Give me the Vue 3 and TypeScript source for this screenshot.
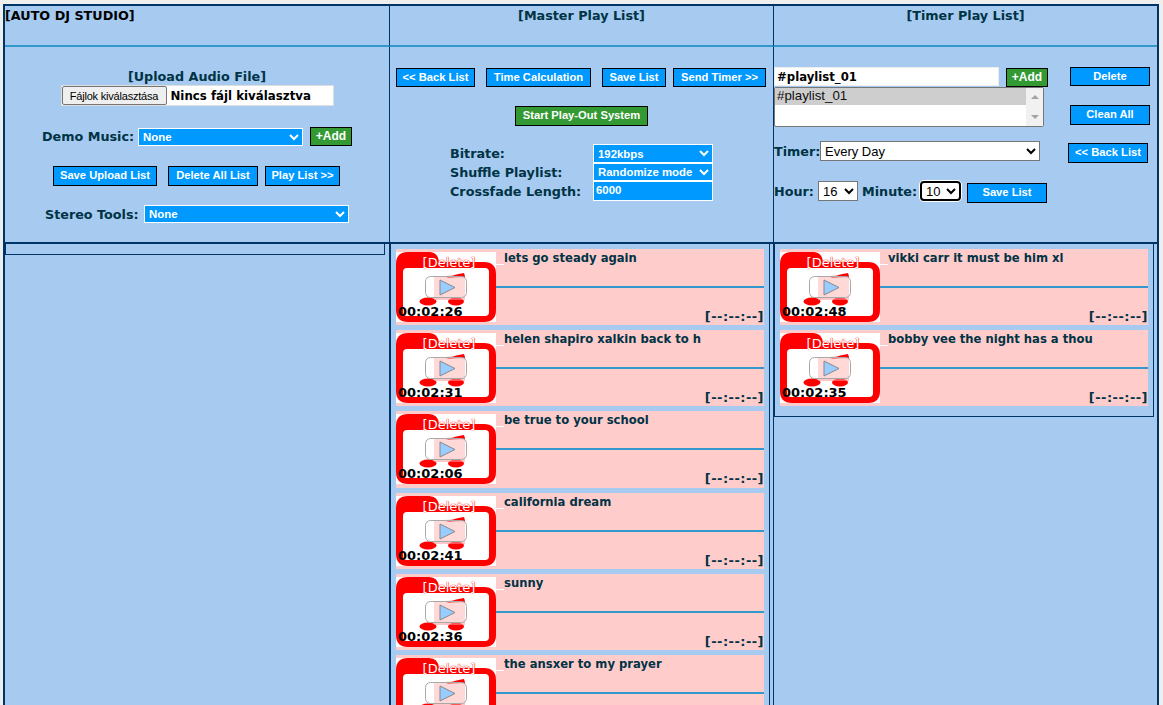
<script setup lang="ts">
interface Track { title: string; time: string }
const master: Track[] = [
  { title: 'lets go steady again', time: '00:02:26' },
  { title: 'helen shapiro xalkin back to h', time: '00:02:31' },
  { title: 'be true to your school', time: '00:02:06' },
  { title: 'california dream', time: '00:02:41' },
  { title: 'sunny', time: '00:02:36' },
  { title: 'the ansxer to my prayer', time: '00:02:52' },
]
const timer: Track[] = [
  { title: 'vikki carr it must be him xl', time: '00:02:48' },
  { title: 'bobby vee the night has a thou', time: '00:02:35' },
]
const lists = [
  { key: 'master', tracks: master, cls: '' },
  { key: 'timer', tracks: timer, cls: 'timer-box' },
]
</script>

<template>
  <div class="studio">
    <div class="cell head head-left">[AUTO DJ STUDIO]</div>
    <div class="cell head">[Master Play List]</div>
    <div class="cell head last">[Timer Play List]</div>

    <section class="cell tools upload">
      <div class="upload-title">[Upload Audio File]</div>
      <div class="file"><button class="file-btn">Fájlok kiválasztása</button><span>Nincs fájl kiválasztva</span></div>
      <div class="row demo">
        <label>Demo Music:</label>
        <select class="sel sel-demo"><option>None</option></select>
        <button class="btn green add">+Add</button>
      </div>
      <div class="row actions">
        <button class="btn w104">Save Upload List</button>
        <button class="btn w90">Delete All List</button>
        <button class="btn w75">Play List &gt;&gt;</button>
      </div>
      <div class="row stereo">
        <label>Stereo Tools:</label>
        <select class="sel sel-stereo"><option>None</option></select>
      </div>
    </section>

    <section class="cell tools master">
      <div class="row master-actions">
        <button class="btn w79">&lt;&lt; Back List</button>
        <button class="btn w105">Time Calculation</button>
        <button class="btn w64">Save List</button>
        <button class="btn w93">Send Timer &gt;&gt;</button>
      </div>
      <button class="btn green start">Start Play-Out System</button>
      <div class="settings">
        <label>Bitrate:</label>
        <select class="sel sel-set"><option>192kbps</option></select>
        <label>Shuffle Playlist:</label>
        <select class="sel sel-set"><option>Randomize mode</option></select>
        <label>Crossfade Length:</label>
        <input class="sel sel-set fade" value="6000" />
      </div>
    </section>

    <section class="cell tools last timer">
      <div class="timer-top">
        <div class="pl-left">
          <div class="pl-add">
            <input class="pl-name" value="#playlist_01" />
            <button class="btn green add">+Add</button>
          </div>
          <div class="pl-wrap">
            <select class="pl-list" size="2">
              <option selected>#playlist_01</option>
            </select>
            <div class="pl-scroll"><i class="up"></i><i class="down"></i></div>
          </div>
        </div>
        <div class="pl-side">
          <button class="btn w80 side-del">Delete</button>
          <button class="btn w80">Clean All</button>
        </div>
      </div>
      <div class="timer-row">
        <label class="timer-label">Timer:</label>
        <select class="plain every"><option>Every Day</option></select>
        <button class="btn w80 timer-back">&lt;&lt; Back List</button>
      </div>
      <div class="time-row">
        <label class="hour">Hour:</label>
        <select class="plain small"><option>16</option></select>
        <label class="minute">Minute:</label>
        <select class="plain small focused"><option>10</option></select>
        <button class="btn w80 time-save">Save List</button>
      </div>
    </section>

    <div class="cell list-cell">
      <div class="empty-box"></div>
    </div>

    <div v-for="l in lists" :key="l.key" class="cell list-cell" :class="{ last: l.key === 'timer' }">
      <div class="track-box" :class="l.cls">
        <article v-for="t in l.tracks" :key="t.title" class="track">
          <div class="thumb">
            <svg width="100" height="70" viewBox="0 0 100 70">
              <defs>
                <filter :id="'soft-' + l.key" x="-10%" y="-10%" width="120%" height="120%">
                  <feGaussianBlur stdDeviation="0.6" />
                </filter>
              </defs>
              <rect width="100" height="70" fill="#fff" />
              <path d="M0 12Q0 0 12 0H33Q42 0 43 10H88Q100 10 100 22V58Q100 70 88 70H12Q0 70 0 58Z" fill="#f00" />
              <rect x="7" y="16" width="86" height="48" rx="4" fill="#fff" />
              <g :filter="'url(#soft-' + l.key + ')'">
                <ellipse cx="32" cy="49.500" rx="8.500" ry="4" fill="#f00" />
                <ellipse cx="60" cy="49.500" rx="8" ry="4" fill="#f00" />
                <path d="M38 25L69 22V48H38Z" fill="#f99" opacity=".55" />
                <path d="M50 26Q60 22 68 21L69 25Q60 25 50 26Z" fill="#f00" />
              </g>
              <rect x="29.500" y="24.500" width="41" height="21" rx="5" fill="#fff" fill-opacity=".3" stroke="#a8a8a8" />
              <path d="M44 28L59 35.500L44 43Z" fill="#99ccff" stroke="#888" />
            </svg>
            <span class="del">[Delete]</span>
            <span class="time">{{ t.time }}</span>
          </div>
          <span class="stub"></span>
          <div class="track-title">{{ t.title }}</div>
          <div class="track-line"></div>
          <div class="track-range">[--:--:--]</div>
        </article>
      </div>
    </div>
  </div>
</template>

<style>
html, body { margin: 0; background: #eeeeee; overflow: hidden; }
</style>

<style scoped>
.studio {
  margin: 4px 4px 0 3px;
  border: 2px solid #003366;
  background: #a6caf0;
  display: grid;
  grid-template-columns: 385px 384px 383px;
  grid-template-rows: 41px 197px auto;
  font: bold 12.750px "DejaVu Sans", Verdana, sans-serif;
  color: #003344;
}
.cell { border-right: 1px solid #003366; box-sizing: border-box; min-width: 0; }
.cell.last { border-right: 0; }
.head { border-bottom: 2px solid #3399cc; text-align: center; line-height: 18px; padding-top: 1px; }
.head-left { text-align: left; color: #000; }
.tools { border-bottom: 2px solid #003366; }
button { cursor: pointer; }
.btn {
  box-sizing: border-box;
  height: 20px;
  padding: 0 0 2px;
  background: #0099ff;
  color: #fff;
  border: 1px solid #000;
  font: bold 11.200px "Liberation Sans", Arial, sans-serif;
  flex: none;
}
.green { background: #339933; }
.add { width: 42px; height: 19px; font-size: 12px; }
.w104 { width: 104px; } .w90 { width: 90px; } .w75 { width: 75px; }
.w79 { width: 79px; } .w105 { width: 105px; } .w64 { width: 64px; } .w93 { width: 93px; }
.w80 { width: 80px; }
.sel {
  box-sizing: border-box;
  height: 18px;
  background-color: #0099ff;
  color: #fff;
  border: 1px solid #fff;
  font: bold 11.400px "Liberation Sans", Arial, sans-serif;
  border-radius: 0;
  flex: none;
  padding: 0;
}
.row { display: flex; align-items: center; }
.upload { display: flex; flex-direction: column; align-items: center; padding-top: 21px; }
.upload-title { line-height: 17px; }
.file {
  display: flex; box-sizing: border-box; width: 273px; height: 21px; background: #fff; align-items: center;
  font-size: 11.800px; color: #000; border: 1px solid #ddd;
}
.file span { margin-left: 4px; }
.file-btn {
  box-sizing: border-box; width: 105px; height: 19px; padding: 0;
  background: #efefef; border: 1px solid #767676; border-radius: 2px;
  font: 11px "Liberation Sans", Arial, sans-serif; letter-spacing: -0.2px; color: #000; flex: none;
}
.demo { margin-top: 21px; align-self: flex-start; margin-left: 37px; height: 19px; }
.demo label { width: 96px; }
.sel-demo { width: 165px; margin-right: 7px; }
.actions { margin-top: 20px; align-self: flex-start; margin-left: 48px; }
.actions .w90 { margin-left: 11px; margin-right: 7px; }
.stereo { margin-top: 19px; align-self: flex-start; margin-left: 40px; height: 18px; }
.stereo label { width: 99px; }
.sel-stereo { width: 205px; }
.master { padding: 21px 0 0 6px; display: flex; flex-direction: column; }
.master-actions { height: 19px; }
.master-actions .btn { height: 19px; }
.master-actions .w105 { margin: 0 11px; }
.master-actions .w93 { margin-left: 7px; }
.start { width: 133px; height: 20px; margin: 19px 0 0 119px; }
.settings {
  display: grid;
  grid-template-columns: 143px 120px;
  grid-template-rows: 19px 18px 20px;
  margin: 18px 0 0 54px;
  align-items: center;
}
.sel-set { width: 120px; height: 100%; }
.fade { outline: none; padding: 0 0 2px 2px; }
.timer { padding-top: 20px; }
.timer-top { display: flex; }
.pl-left { width: 296px; }
.pl-add { display: flex; align-items: flex-start; height: 20px; }
.pl-add .add { margin-top: 1px; }
.pl-name {
  box-sizing: border-box; width: 225px; height: 19px; border: 1px solid #eee; background: #fff;
  font: bold 11.700px "DejaVu Sans", sans-serif; color: #000; padding: 0 2px; margin-right: 7px;
}
.pl-wrap { position: relative; width: 270px; height: 40px; }
.pl-list {
  display: block; box-sizing: border-box; width: 270px; height: 40px; overflow: hidden;
  border: 1px solid #767676; border-radius: 2px; background: #fff; padding: 0;
  font: 13.300px "Liberation Sans", Arial, sans-serif; color: #333;
}
.pl-scroll {
  position: absolute; top: 1px; right: 1px; bottom: 1px; width: 17px; background: #f1f1f1;
  display: flex; flex-direction: column; justify-content: space-between; align-items: center; padding: 7px 0;
  box-sizing: border-box;
}
.pl-scroll i { width: 0; height: 0; border-left: 4px solid transparent; border-right: 4px solid transparent; }
.pl-scroll .up { border-bottom: 4px solid #a3a3a3; }
.pl-scroll .down { border-top: 4px solid #a3a3a3; }
.pl-side { display: flex; flex-direction: column; gap: 19px; }
.side-del { height: 19px; }
.timer-row { display: flex; align-items: flex-start; margin-top: 14px; height: 20px; line-height: 21px; }
.timer-label { width: 46px; flex: none; }
.plain {
  box-sizing: border-box; height: 20px; background: #fff; color: #000; flex: none;
  border: 1px solid #767676; border-radius: 0; font: 13px "Liberation Sans", Arial, sans-serif;
}
.every { width: 220px; }
.timer-back { margin: 2px 0 0 28px; }
.time-row { display: flex; align-items: flex-start; margin-top: 20px; height: 20px; line-height: 21px; }
.hour { width: 44px; flex: none; }
.small { width: 40px; }
.minute { width: 58px; flex: none; margin-left: 4px; }
.focused { width: 41px; border: 2px solid #000; border-radius: 4px; box-shadow: 0 0 0 1px #fff; outline: none; }
.time-save { margin: 2px 0 0 6px; }
.list-cell { height: 461px; }
.empty-box { box-sizing: border-box; height: 11px; width: 380px; border: 1px solid #003366; border-top-width: 0; }
.track-box {
  box-sizing: border-box;
  width: 380px;
  border: 1px solid #003366;
  border-top: 0;
  padding: 5px 5px 0;
  display: flex;
  flex-direction: column;
  gap: 5px;
}
.timer-box { padding-bottom: 10px; }
.track {
  position: relative;
  height: 76.200px;
  flex: none;
  background: #ffcccc;
  display: flex;
  flex-direction: column;
  padding-left: 108px;
}
.thumb { position: absolute; left: 0; top: 3px; width: 100px; height: 70px; }
.thumb svg { display: block; }
.del {
  position: absolute; left: 26px; top: 4px; width: 54px; text-align: center;
  color: #fff; font-size: 13px; line-height: 13px; white-space: nowrap; font-weight: normal;
  text-shadow: 0 0 1px #f00, 0 0 1px #f00;
}
.time { position: absolute; left: 2px; top: 52px; color: #000; font-size: 13px; line-height: 16px; }
.stub { position: absolute; left: 100px; top: 15px; width: 8px; height: 1px; background: #fff; }
.track-title { font-size: 11.600px; line-height: 16px; height: 16px; margin-top: 1px; white-space: nowrap; overflow: hidden; }
.track-line { position: absolute; left: 100px; right: 0; top: 37px; height: 2px; background: #3399cc; }
.track-range { position: absolute; right: 0; top: 60px; line-height: 16px; font-size: 13px; letter-spacing: .45px; }
</style>
